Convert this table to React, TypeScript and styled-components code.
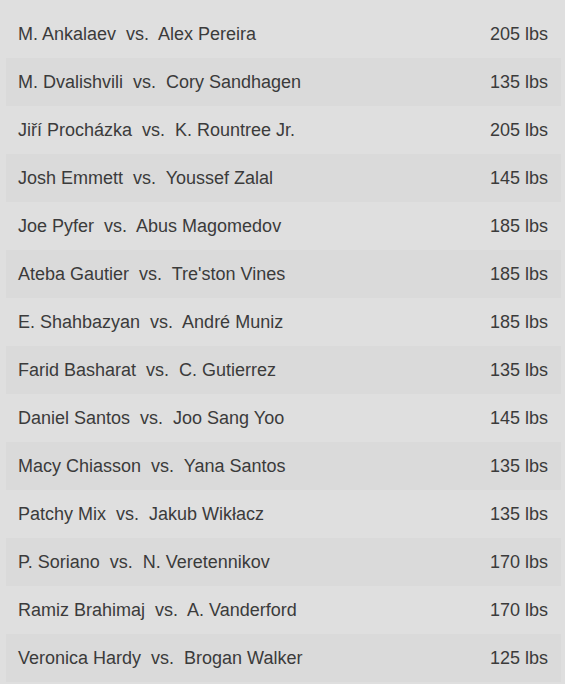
import React from "react";
import styled, { createGlobalStyle } from "styled-components";

const Global = createGlobalStyle`
  html, body { margin: 0; padding: 0; background: #dfdfdf; }
  body { font-family: "Liberation Sans", Arial, sans-serif; }
`;

const List = styled.div`
  display: flex;
  flex-direction: column;
  padding: 10px 4px 2px 6px;
`;

const Row = styled.div<{ $striped: boolean }>`
  display: flex;
  align-items: center;
  justify-content: space-between;
  height: 48px;
  padding: 1px 13px 0 12px;
  box-sizing: border-box;
  background: ${(p) => (p.$striped ? "#dadada" : "transparent")};
  color: #3b3b3b;
  font-size: 18px;
`;

const Names = styled.span`
  white-space: pre;
`;

const Weight = styled.span`
  white-space: pre;
`;

const fights: [string, string, string][] = [
  ["M. Ankalaev", "Alex Pereira", "205"],
  ["M. Dvalishvili", "Cory Sandhagen", "135"],
  ["Jiří Procházka", "K. Rountree Jr.", "205"],
  ["Josh Emmett", "Youssef Zalal", "145"],
  ["Joe Pyfer", "Abus Magomedov", "185"],
  ["Ateba Gautier", "Tre'ston Vines", "185"],
  ["E. Shahbazyan", "André Muniz", "185"],
  ["Farid Basharat", "C. Gutierrez", "135"],
  ["Daniel Santos", "Joo Sang Yoo", "145"],
  ["Macy Chiasson", "Yana Santos", "135"],
  ["Patchy Mix", "Jakub Wikłacz", "135"],
  ["P. Soriano", "N. Veretennikov", "170"],
  ["Ramiz Brahimaj", "A. Vanderford", "170"],
  ["Veronica Hardy", "Brogan Walker", "125"],
];

export default function App() {
  return (
    <>
      <Global />
      <List>
        {fights.map(([a, b, w], i) => (
          <Row key={i} $striped={i % 2 === 1}>
            <Names>{`${a}  vs.  ${b}`}</Names>
            <Weight>{`${w} lbs`}</Weight>
          </Row>
        ))}
      </List>
    </>
  );
}
